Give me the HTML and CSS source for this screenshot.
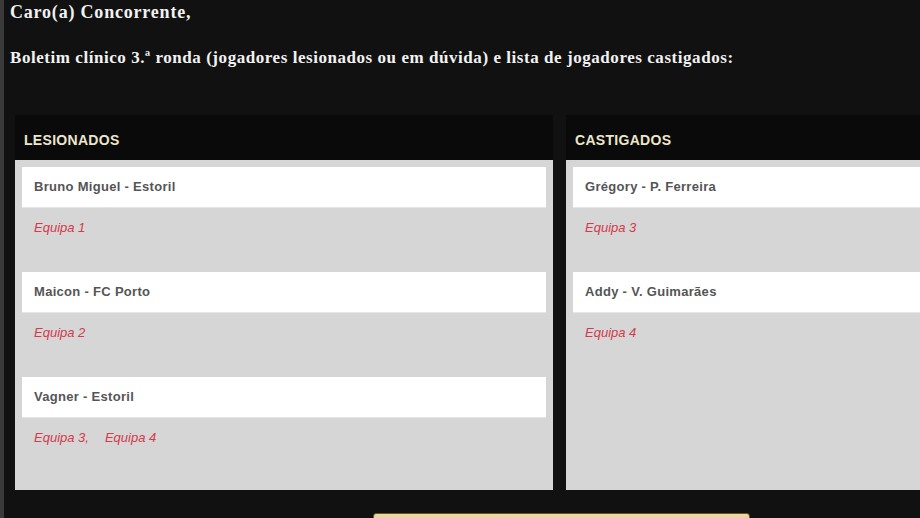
FILE: index.html
```html
<!DOCTYPE html>
<html lang="pt">
<head>
<meta charset="utf-8">
<link rel="stylesheet" href="styles.css">
</head>
<body>
<div class="page">
  <div class="intro">
    <p class="greet">Caro(a) Concorrente,</p>
    <p class="lead">Boletim clínico 3.ª ronda (jogadores lesionados ou em dúvida) e lista de jogadores castigados:</p>
  </div>
  <div class="board">
    <div class="panels">
      <section class="panel">
        <h2 class="panel-title">LESIONADOS</h2>
        <div class="panel-body">
          <div class="item">
            <div class="player">Bruno Miguel - Estoril</div>
            <div class="teams"><span class="team">Equipa 1</span></div>
          </div>
          <div class="item">
            <div class="player">Maicon - FC Porto</div>
            <div class="teams"><span class="team">Equipa 2</span></div>
          </div>
          <div class="item">
            <div class="player">Vagner - Estoril</div>
            <div class="teams"><span class="team">Equipa 3,</span><span class="team">Equipa 4</span></div>
          </div>
        </div>
      </section>
      <section class="panel">
        <h2 class="panel-title">CASTIGADOS</h2>
        <div class="panel-body">
          <div class="item">
            <div class="player">Grégory - P. Ferreira</div>
            <div class="teams"><span class="team">Equipa 3</span></div>
          </div>
          <div class="item">
            <div class="player">Addy - V. Guimarães</div>
            <div class="teams"><span class="team">Equipa 4</span></div>
          </div>
        </div>
      </section>
    </div>
    <div class="actions">
      <button class="btn" aria-label="Continuar"></button>
    </div>
  </div>
</div>
</body>
</html>
```
FILE: styles.css
```css
html, body {
  margin: 0;
  padding: 0;
}
body {
  background: #111111;
  width: 920px;
  height: 518px;
  overflow: hidden;
}
.page {
  border-left: 4px solid #3a3a3a;
  min-height: 518px;
  box-sizing: border-box;
}
.intro {
  padding: 2px 0 0 6px;
  font-family: "Liberation Serif", "DejaVu Serif", serif;
  color: #f2f2f2;
}
.greet {
  margin: 0;
  font-size: 18px;
  font-weight: bold;
  letter-spacing: 0.8px;
  line-height: 20px;
}
.lead {
  margin: 26px 0 0;
  font-size: 17px;
  font-weight: bold;
  letter-spacing: 0.55px;
  line-height: 20px;
}
.board {
  width: 1090px;
  margin: 47px 0 0 11px;
}
.panels {
  display: flex;
  gap: 13px;
}
.panel {
  width: 538px;
  flex: none;
}
.panel-title {
  margin: 0;
  height: 45px;
  box-sizing: border-box;
  padding: 17px 0 0 9px;
  font-family: "Liberation Sans", Arial, sans-serif;
  font-size: 14px;
  font-weight: bold;
  letter-spacing: 0.3px;
  color: #ece6cc;
  background: #0a0a0a;
}
.panel-body {
  background: #d6d6d6;
  height: 330px;
  box-sizing: border-box;
  padding: 7px 7px 0;
}
.item {
  height: 105px;
}
.player {
  background: #ffffff;
  height: 41px;
  box-sizing: border-box;
  padding: 12px 0 0 12px;
  font-family: "Liberation Sans", Arial, sans-serif;
  font-size: 13px;
  font-weight: bold;
  letter-spacing: 0.3px;
  color: #555555;
  border-bottom: 1px solid #e6e6e6;
}
.teams {
  padding: 12px 0 0 12px;
  display: flex;
  gap: 16px;
}
.team {
  font-family: "Liberation Sans", Arial, sans-serif;
  font-size: 13px;
  font-style: italic;
  color: #d33a4b;
}
.actions {
  display: flex;
  justify-content: center;
  padding-top: 23px;
}
.btn {
  width: 377px;
  height: 40px;
  margin-left: 2px;
  border: 1px solid #6b5323;
  border-radius: 3px;
  background: linear-gradient(#ecd9a4, #c9a65a);
}
```
